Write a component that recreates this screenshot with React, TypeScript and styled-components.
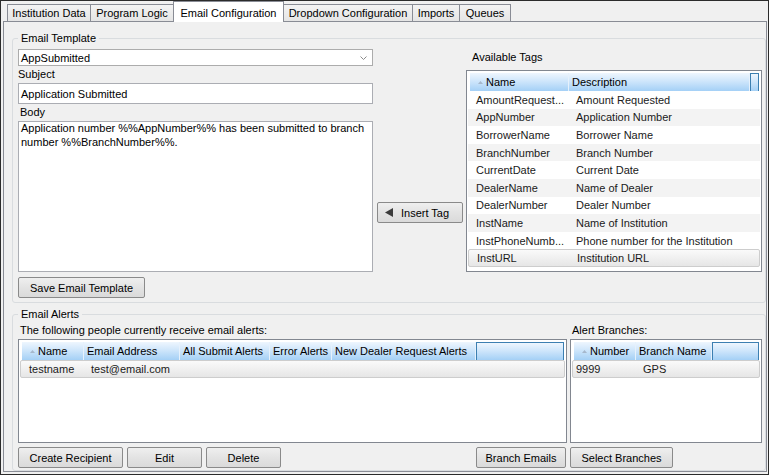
import { FC } from 'react';
import styled, { createGlobalStyle, css } from 'styled-components';

const GlobalStyle = createGlobalStyle`
  * { box-sizing: border-box; }
  html, body { margin: 0; padding: 0; background: #f0f0f0; }
  body {
    font-family: "Liberation Sans", Arial, sans-serif;
    font-size: 11px;
    color: #000;
  }
`;

const Window = styled.div`
  width: 769px;
  height: 475px;
  border: 1px solid #2b2b2b;
  background: #f0f0f0;
  padding: 0 1px 2px 2px;
  display: flex;
  flex-direction: column;
  overflow: hidden;
`;

const TabStrip = styled.div`
  display: flex;
  align-items: flex-end;
  height: 20px;
  flex: none;
  padding-left: 4px;
  position: relative;
  z-index: 1;
`;

const Tab = styled.div<{ $w: number; $active?: boolean }>`
  width: ${p => p.$w}px;
  height: 17px;
  margin-left: -1px;
  border: 1px solid #898c95;
  border-bottom: none;
  background: linear-gradient(#f3f3f3, #e5e5e5);
  display: flex;
  align-items: center;
  justify-content: center;
  white-space: nowrap;
  line-height: 13px;
  &:first-child { margin-left: 0; }
  ${p => p.$active && css`
    height: 21px;
    margin-bottom: -1px;
    padding-top: 2px;
    background: #fff;
    position: relative;
    z-index: 2;
  `}
`;

const Panel = styled.div`
  flex: 1;
  min-height: 0;
  border: 1px solid #898c95;
  background: #f0f0f0;
  padding: 10px 0 0 8px;
  display: flex;
  flex-direction: column;
  gap: 5px;
`;

const Group = styled.fieldset<{ $grow?: boolean }>`
  margin: 0;
  min-width: 0;
  padding: 0 3px 4px 5px;
  border: 1px solid #d9dcdf;
  border-radius: 3px;
  ${p => p.$grow && css`
    flex: 1;
    padding-bottom: 1px;
  `}
`;

const Legend = styled.legend`
  padding: 0 3px;
  height: 12px;
  line-height: 12px;
`;

const TemplateLayout = styled.div`
  display: flex;
  align-items: flex-start;
`;

const EditorColumn = styled.div`
  width: 355px;
  display: flex;
  flex-direction: column;
`;

const InsertColumn = styled.div`
  width: 86px;
  margin-left: 4px;
  padding-top: 158px;
`;

const TagsColumn = styled.div`
  width: 296px;
  margin-left: 3px;
  display: flex;
  flex-direction: column;
`;

const Combo = styled.div`
  height: 17px;
  margin-top: 5px;
  border: 1px solid #acacac;
  background: #fff;
  padding: 0 5px 0 2px;
  display: flex;
  align-items: center;
  justify-content: space-between;
`;

const FieldLabel = styled.div<{ $indent?: number; $top?: number }>`
  margin-top: ${p => p.$top ?? 2}px;
  padding-left: ${p => p.$indent ?? 0}px;
  height: 13px;
  line-height: 13px;
  white-space: nowrap;
`;

const TextBox = styled.div`
  height: 21px;
  margin-top: 2px;
  border: 1px solid #abadb3;
  background: #fff;
  padding: 0 2px;
  display: flex;
  align-items: center;
`;

const BodyBox = styled.div`
  height: 151px;
  margin-top: 2px;
  border: 1px solid #abadb3;
  background: #fff;
  padding: 0 2px;
  line-height: 13.5px;
  white-space: nowrap;
`;

const Button = styled.button<{ $w: number }>`
  width: ${p => p.$w}px;
  height: 21px;
  flex: none;
  border: 1px solid #8a8a8a;
  border-radius: 2px;
  background: linear-gradient(#efefef, #e3e3e3 50%, #dadada);
  font: inherit;
  color: #000;
  padding: 0;
  display: inline-flex;
  align-items: center;
  justify-content: center;
`;

const SaveButton = styled(Button)`
  margin-top: 5px;
`;

const InsertButton = styled(Button)`
  justify-content: flex-start;
  padding-left: 7px;
  gap: 8px;
`;

const ListBox = styled.div<{ $h: number }>`
  height: ${p => p.$h}px;
  border: 1px solid #828790;
  background: #fff;
  padding: 2px 2px 2px 3px;
  overflow: hidden;
`;

const headerFill = css`
  background: linear-gradient(#eef6fe 0%, #cfe6fb 45%, #a4d0f6 100%);
`;

const HeaderRow = styled.div<{ $h: number }>`
  height: ${p => p.$h}px;
  display: flex;
`;

const HeaderCell = styled.div<{ $w: number }>`
  ${headerFill};
  width: ${p => p.$w}px;
  flex: none;
  padding-left: 3px;
  border-right: 1px solid #e6f1fc;
  display: flex;
  align-items: center;
  white-space: nowrap;
  overflow: hidden;
`;

const HeaderFiller = styled.div`
  ${headerFill};
  flex: 1;
  border: 1px solid #3c7fb1;
  border-bottom: none;
`;

const SortMark = styled.svg`
  margin: 0 3px 0 5px;
  flex: none;
`;

const Row = styled.div<{ $striped?: boolean; $selected?: boolean }>`
  height: 17.6px;
  display: flex;
  align-items: center;
  margin: 0 -1px 0 -2px;
  padding: 0 1px 0 2px;
  color: #1a1a1a;
  ${p => p.$striped && css`background: #f3f3f3;`}
  ${p => p.$selected && css`
    background: linear-gradient(#fafafa, #e6e6e6);
    border: 1px solid #cdcdcd;
    border-radius: 2px;
  `}
`;

const Cell = styled.div<{ $w: number; $pad: number }>`
  width: ${p => p.$w}px;
  flex: none;
  padding-left: ${p => p.$pad}px;
  white-space: nowrap;
  overflow: hidden;
`;

const AlertsLayout = styled.div`
  display: flex;
`;

const AlertsColumn = styled.div<{ $w: number; $gap?: number }>`
  width: ${p => p.$w}px;
  margin-left: ${p => p.$gap ?? 0}px;
  display: flex;
  flex-direction: column;
`;

const ListSlot = styled.div<{ $top?: number }>`
  margin-top: ${p => p.$top ?? 2}px;
`;

const ButtonBar = styled.div`
  margin-top: 4px;
  display: flex;
  justify-content: space-between;
  padding-right: 1px;
`;

const ButtonGroup = styled.div`
  display: flex;
  gap: 4px;
`;

type Column = { title: string; width: number; sort?: boolean; pad?: number };

type ListViewProps = {
  height: number;
  headerHeight: number;
  columns: Column[];
  rows: string[][];
  selected?: number;
  striped?: boolean;
};

const ListView: FC<ListViewProps> = ({ height, headerHeight, columns, rows, selected, striped }) => (
  <ListBox $h={height}>
    <HeaderRow $h={headerHeight}>
      {columns.map(col => (
        <HeaderCell key={col.title} $w={col.width}>
          {col.sort && (
            <SortMark width="5" height="3" viewBox="0 0 5 3">
              <polygon points="0,3 2.5,0 5,3" fill="#a6b8cc" />
            </SortMark>
          )}
          {col.title}
        </HeaderCell>
      ))}
      <HeaderFiller />
    </HeaderRow>
    {rows.map((row, i) => (
      <Row key={i} $striped={striped && i % 2 === 1 && i !== selected} $selected={i === selected}>
        {row.map((value, j) => (
          <Cell key={j} $w={columns[j].width} $pad={columns[j].pad ?? 6}>
            {value}
          </Cell>
        ))}
      </Row>
    ))}
  </ListBox>
);

const tabs = [
  { label: 'Institution Data', width: 84 },
  { label: 'Program Logic', width: 84 },
  { label: 'Email Configuration', width: 111, active: true },
  { label: 'Dropdown Configuration', width: 130 },
  { label: 'Imports', width: 48 },
  { label: 'Queues', width: 52 },
];

const tagColumns: Column[] = [
  { title: 'Name', width: 99, sort: true },
  { title: 'Description', width: 181, pad: 7 },
];

const tagRows = [
  ['AmountRequest...', 'Amount Requested'],
  ['AppNumber', 'Application Number'],
  ['BorrowerName', 'Borrower Name'],
  ['BranchNumber', 'Branch Number'],
  ['CurrentDate', 'Current Date'],
  ['DealerName', 'Name of Dealer'],
  ['DealerNumber', 'Dealer Number'],
  ['InstName', 'Name of Institution'],
  ['InstPhoneNumb...', 'Phone number for the Institution'],
  ['InstURL', 'Institution URL'],
];

const alertColumns: Column[] = [
  { title: 'Name', width: 62, sort: true },
  { title: 'Email Address', width: 96 },
  { title: 'All Submit Alerts', width: 90 },
  { title: 'Error Alerts', width: 62 },
  { title: 'New Dealer Request Alerts', width: 144 },
];

const branchColumns: Column[] = [
  { title: 'Number', width: 62, sort: true, pad: 1 },
  { title: 'Branch Name', width: 76 },
];

export default function App() {
  return (
    <>
      <GlobalStyle />
      <Window>
        <TabStrip>
          {tabs.map(t => (
            <Tab key={t.label} $w={t.width} $active={t.active}>
              {t.label}
            </Tab>
          ))}
        </TabStrip>
        <Panel>
          <Group>
            <Legend>Email Template</Legend>
            <TemplateLayout>
              <EditorColumn>
                <Combo>
                  <span>AppSubmitted</span>
                  <svg width="7" height="4" viewBox="0 0 7 4">
                    <polyline points="0.5,0.5 3.5,3.5 6.5,0.5" fill="none" stroke="#8a8a8a" strokeWidth="1" />
                  </svg>
                </Combo>
                <FieldLabel>Subject</FieldLabel>
                <TextBox>Application Submitted</TextBox>
                <FieldLabel $indent={2}>Body</FieldLabel>
                <BodyBox>
                  Application number %%AppNumber%% has been submitted to branch
                  <br />
                  number %%BranchNumber%%.
                </BodyBox>
                <SaveButton $w={127}>Save Email Template</SaveButton>
              </EditorColumn>
              <InsertColumn>
                <InsertButton $w={86}>
                  <svg width="8" height="9" viewBox="0 0 8 9">
                    <polygon points="8,0 8,9 0,4.5" fill="#3a3a3a" />
                  </svg>
                  Insert Tag
                </InsertButton>
              </InsertColumn>
              <TagsColumn>
                <FieldLabel $indent={6} $top={7}>Available Tags</FieldLabel>
                <ListSlot $top={6}>
                  <ListView
                    height={202}
                    headerHeight={18}
                    columns={tagColumns}
                    rows={tagRows}
                    selected={9}
                    striped
                  />
                </ListSlot>
              </TagsColumn>
            </TemplateLayout>
          </Group>
          <Group $grow>
            <Legend>Email Alerts</Legend>
            <AlertsLayout>
              <AlertsColumn $w={549}>
                <FieldLabel $indent={2} $top={4}>The following people currently receive email alerts:</FieldLabel>
                <ListSlot>
                  <ListView
                    height={104}
                    headerHeight={18}
                    columns={alertColumns}
                    rows={[['testname', 'test@email.com', '', '', '']]}
                    selected={0}
                  />
                </ListSlot>
                <ButtonBar>
                  <ButtonGroup>
                    <Button $w={105}>Create Recipient</Button>
                    <Button $w={75}>Edit</Button>
                    <Button $w={75}>Delete</Button>
                  </ButtonGroup>
                  <Button $w={90}>Branch Emails</Button>
                </ButtonBar>
              </AlertsColumn>
              <AlertsColumn $w={192} $gap={3}>
                <FieldLabel $indent={2} $top={4}>Alert Branches:</FieldLabel>
                <ListSlot>
                  <ListView
                    height={104}
                    headerHeight={18}
                    columns={branchColumns}
                    rows={[['9999', 'GPS']]}
                    selected={0}
                  />
                </ListSlot>
                <ButtonBar>
                  <Button $w={103}>Select Branches</Button>
                </ButtonBar>
              </AlertsColumn>
            </AlertsLayout>
          </Group>
        </Panel>
      </Window>
    </>
  );
}
